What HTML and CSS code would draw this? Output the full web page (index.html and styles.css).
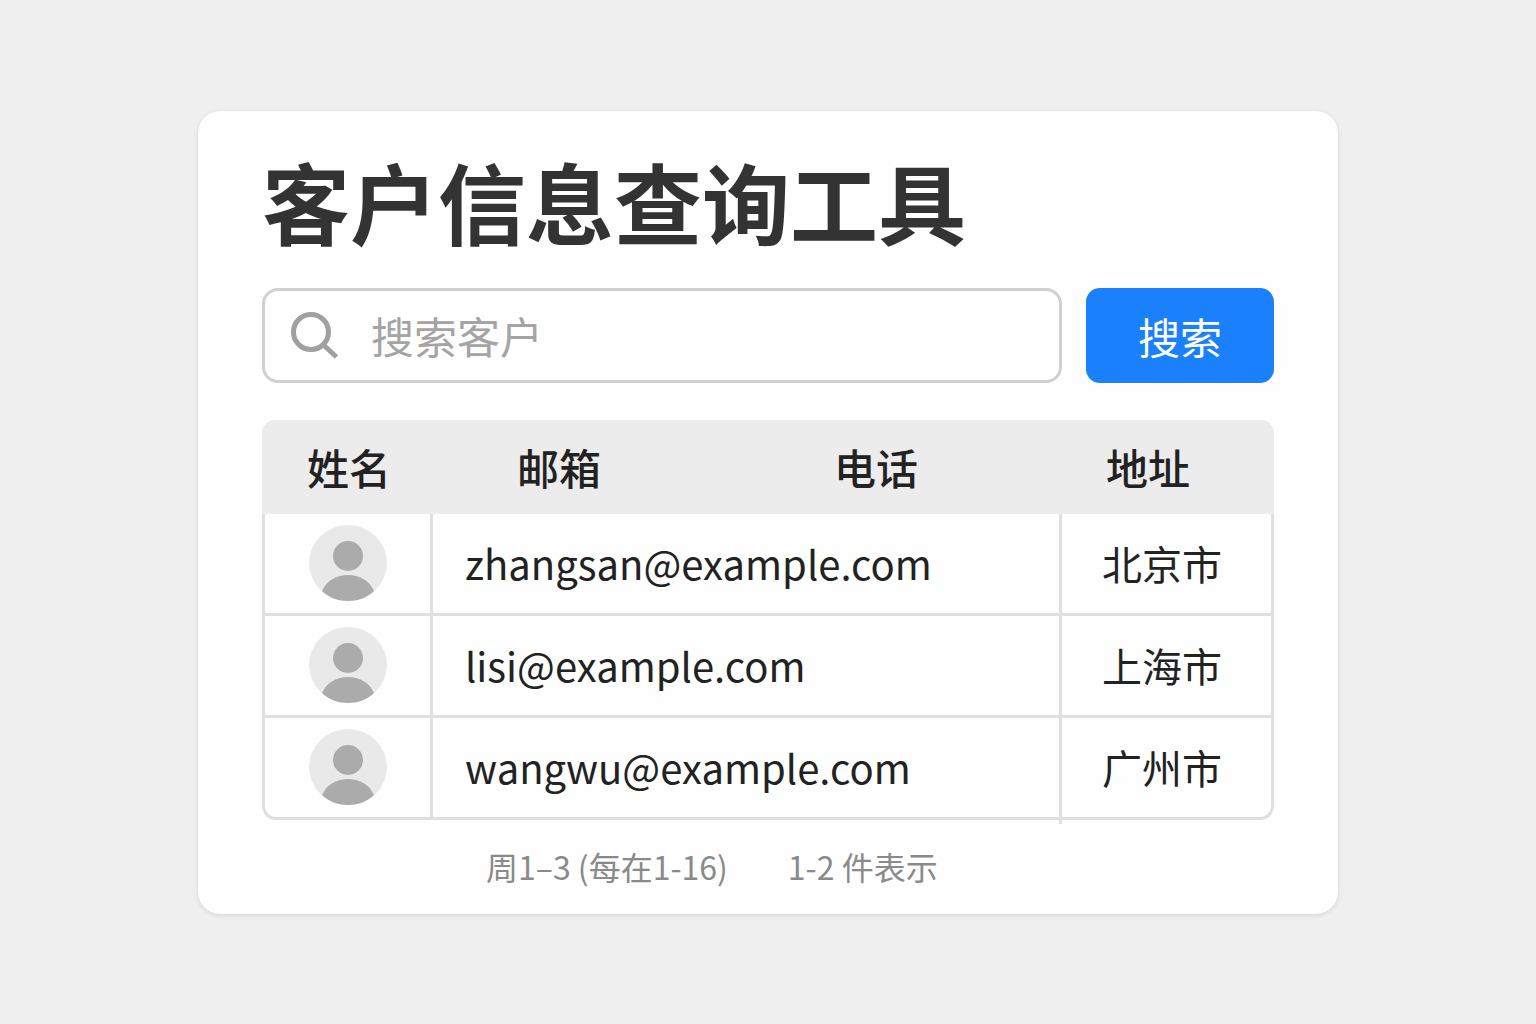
FILE: index.html
```html
<!DOCTYPE html>
<html lang="zh-CN">
<head>
<meta charset="utf-8">
<meta name="viewport" content="width=device-width, initial-scale=1">
<title>客户信息查询工具</title>
<link rel="stylesheet" href="styles.css">
</head>
<body>
<main class="card">
  <h1 class="title">客户信息查询工具</h1>

  <form class="search" role="search">
    <label class="field" for="query">
      <svg class="field-icon" viewBox="0 0 48 48" aria-hidden="true">
        <circle cx="20" cy="21" r="17.5"/>
        <path d="M32 33.500 45.500 46"/>
      </svg>
      <input class="field-input" id="query" type="text" placeholder="搜索客户" aria-label="搜索客户">
    </label>
    <button class="search-button" type="button">搜索</button>
  </form>

  <table class="customers">
    <colgroup>
      <col class="col-name">
      <col class="col-email">
      <col class="col-phone">
      <col class="col-address">
    </colgroup>
    <thead>
      <tr><th class="center" scope="col">姓名</th><th class="indent" scope="col">邮箱</th><th class="indent" scope="col">电话</th><th scope="col">地址</th></tr>
    </thead>
    <tbody>
      <tr>
        <td class="center"><svg class="avatar" viewBox="0 0 78 76" aria-hidden="true"><ellipse class="avatar-bg" cx="39" cy="38" rx="39" ry="38"/><circle class="avatar-fg" cx="39" cy="31" r="15"/><path class="avatar-fg" d="M13 66C18 55 28 50 39 50S60 55 65 66C58 73 48 76 39 76S20 73 13 66Z"/></svg></td>
        <td class="email" colspan="2">zhangsan@example.com</td>
        <td class="address">北京市</td>
      </tr>
      <tr>
        <td class="center"><svg class="avatar" viewBox="0 0 78 76" aria-hidden="true"><ellipse class="avatar-bg" cx="39" cy="38" rx="39" ry="38"/><circle class="avatar-fg" cx="39" cy="31" r="15"/><path class="avatar-fg" d="M13 66C18 55 28 50 39 50S60 55 65 66C58 73 48 76 39 76S20 73 13 66Z"/></svg></td>
        <td class="email" colspan="2">lisi@example.com</td>
        <td class="address">上海市</td>
      </tr>
      <tr>
        <td class="center"><svg class="avatar" viewBox="0 0 78 76" aria-hidden="true"><ellipse class="avatar-bg" cx="39" cy="38" rx="39" ry="38"/><circle class="avatar-fg" cx="39" cy="31" r="15"/><path class="avatar-fg" d="M13 66C18 55 28 50 39 50S60 55 65 66C58 73 48 76 39 76S20 73 13 66Z"/></svg></td>
        <td class="email" colspan="2">wangwu@example.com</td>
        <td class="address">广州市</td>
      </tr>
    </tbody>
  </table>

  <footer class="summary">
    <span>周1–3 (每在1-16)</span>
    <span>1-2 件表示</span>
  </footer>
</main>
</body>
</html>
```

FILE: styles.css
```css
* {
  box-sizing: border-box;
}

body {
  margin: 0;
  min-height: 100vh;
  display: flex;
  align-items: center;
  justify-content: center;
  background: #efefef;
  color: #222;
  font-family: "Noto Sans CJK SC", sans-serif;
}

.card {
  width: calc(100% - 64px);
  max-width: 1140px;
  padding: 41px 64px 24px;
  background: #fefefe;
  border-radius: 22px;
  box-shadow: 0 1px 4px rgba(0, 0, 0, 0.12);
}

.title {
  margin: 0 0 40px;
  font-size: 88px;
  line-height: 96px;
  font-weight: 700;
  color: #333;
}

.search {
  display: flex;
  gap: 24px;
  margin-bottom: 37px;
}

.field {
  flex: 1;
  min-width: 0;
  height: 95px;
  display: flex;
  align-items: center;
  gap: 32px;
  padding: 0 26px;
  border: 3px solid #d0d0d0;
  border-radius: 16px;
}

.field-icon {
  flex: none;
  width: 48px;
  height: 48px;
  fill: none;
  stroke: #a0a0a0;
  stroke-width: 5;
}

.field-input {
  flex: 1;
  min-width: 0;
  padding: 0;
  border: 0;
  outline: 0;
  background: none;
  font: inherit;
  font-size: 43px;
  line-height: 64px;
  color: #222;
}

.field-input::placeholder {
  color: #a4a4a4;
  opacity: 1;
}

.search-button {
  width: 188px;
  padding: 0;
  border: 0;
  border-radius: 14px;
  background: #1a80fb;
  color: #fff;
  font: inherit;
  font-size: 42px;
}

.customers {
  width: 100%;
  table-layout: fixed;
  border: 3px solid #e0e0e0;
  border-top: 0;
  border-radius: 14px;
  border-spacing: 0;
}

.col-name {
  width: 168px;
}

.col-phone {
  width: 312px;
}

.col-address {
  width: 209px;
}

th {
  height: 94px;
  padding: 0 44px;
  background: #ececec;
  text-align: left;
  font-size: 42px;
  line-height: 60px;
  font-weight: 500;
}

th:first-child {
  border-top-left-radius: 14px;
  box-shadow: -3px 0 #ececec;
}

th:last-child {
  border-top-right-radius: 14px;
  box-shadow: 3px 0 #ececec;
}

th.indent {
  padding: 0 0 0 84px;
}

td {
  height: 102px;
  padding: 0 0 0 32px;
  border-right: 3px solid #e0e0e0;
  border-bottom: 3px solid #e0e0e0;
  font-size: 40px;
  line-height: 60px;
}

td:last-child {
  border-right: 0;
}

tr:last-child td {
  height: 99px;
  border-bottom: 0;
}

th.center,
td.center {
  padding: 0;
  text-align: center;
}

td.address {
  position: relative;
  padding-left: 40px;
}

/* the last divider runs on a little below the table frame */
tr:last-child .address::before {
  content: "";
  position: absolute;
  left: -3px;
  top: 100%;
  width: 3px;
  height: 7px;
  background: #e0e0e0;
}

.avatar {
  display: block;
  width: 78px;
  height: 76px;
  margin: 0 auto;
}

.avatar-bg {
  fill: #e9e9e9;
}

.avatar-fg {
  fill: #ababab;
}

.summary {
  display: flex;
  gap: 60px;
  margin-top: 22px;
  padding-left: 224px;
  font-size: 32px;
  line-height: 48px;
  color: #8a8a8a;
}
```
